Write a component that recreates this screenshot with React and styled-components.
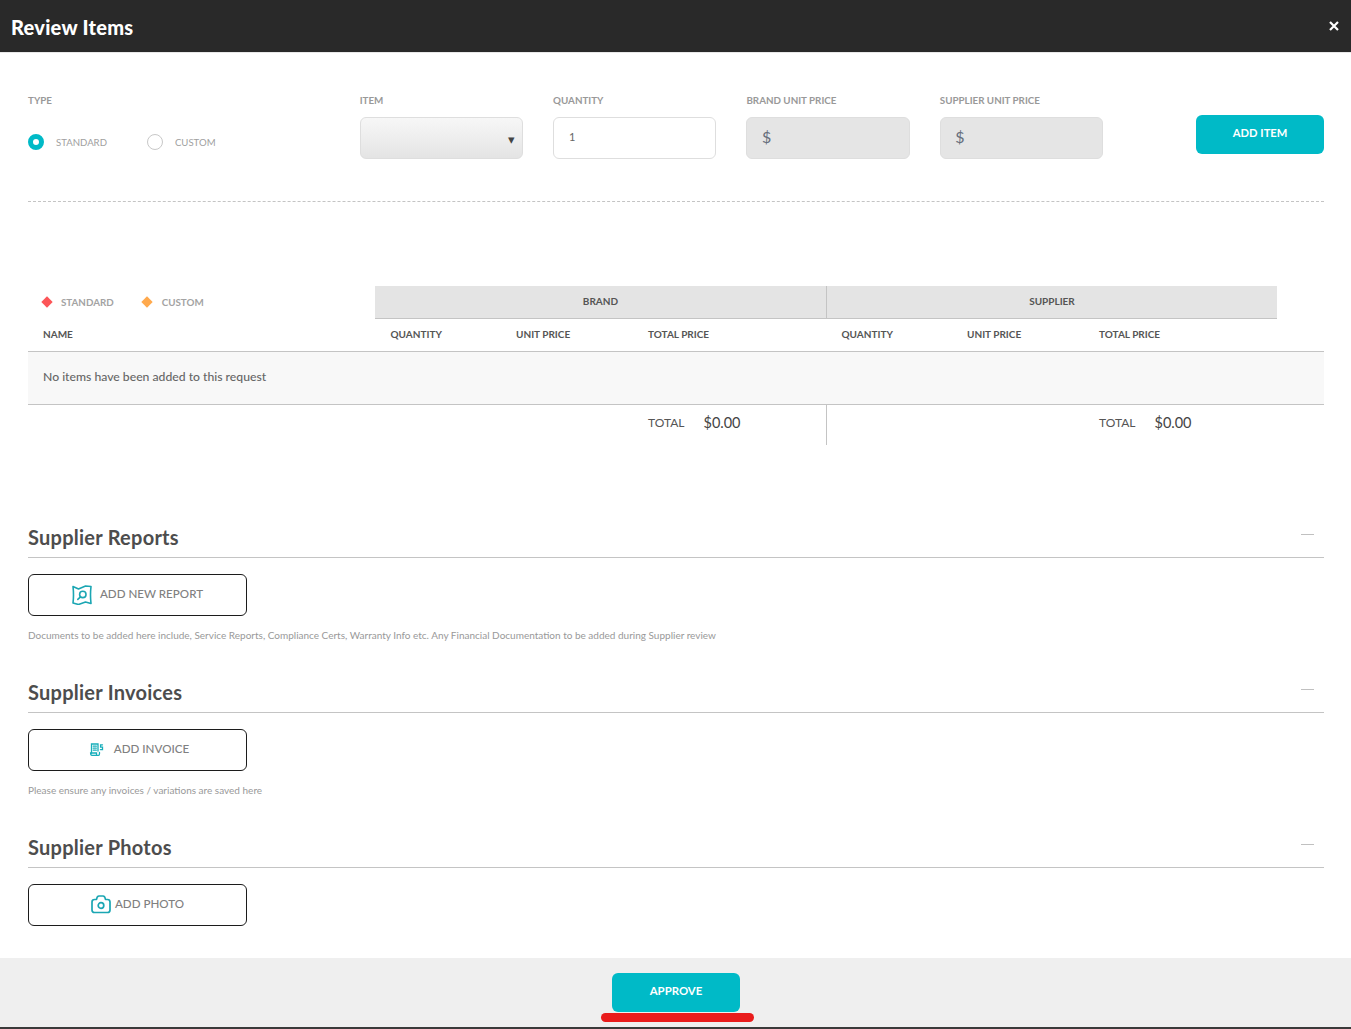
import React from "react";
import styled, { createGlobalStyle } from "styled-components";

const GlobalStyle = createGlobalStyle`
  html, body {
    margin: 0;
    padding: 0;
    background: #fff;
    font-family: "Lato", "Open Sans", sans-serif;
  }
  * {
    box-sizing: border-box;
  }
`;

const TEAL = "#00bac7";

function MapSearchIcon() {
  return (
    <svg width="20" height="20" viewBox="0 0 20 20" fill="none" stroke="#1ba6b3" strokeWidth="1.6" strokeLinejoin="round" strokeLinecap="round">
      <path d="M1 1.5 L6.5 4 L13.5 1 L19 1.5 Q18 10 19 18.5 L13.5 17 L6.5 19.5 L1 18 Q2 10 1 1.5 Z" />
      <circle cx="10.8" cy="9.4" r="3.2" />
      <path d="M8.5 11.8 L5.8 14.4" />
    </svg>
  );
}

function InvoiceIcon() {
  return (
    <svg width="18" height="14" viewBox="-4 0 18 14" fill="none" stroke="#17aebb" strokeWidth="1.3" strokeLinecap="round">
      <path d="M1.5 10 V1 H8 V8" />
      <path d="M3.3 3.2 H6.3 M3.3 5.2 H6.3 M3.3 7.2 H6.3" />
      <path d="M0.6 10 H6.5 V12.4 H2 Q0.6 12.4 0.6 10 Z M6.5 12.4 H8.5 Q9.5 12.4 9.5 10.5 V9.5" />
      <path d="M12.5 1.8 H10.6 V4.2 H12.5 V6.6 H10.4" />
    </svg>
  );
}

function CameraIcon() {
  return (
    <svg width="20" height="19" viewBox="0 0 20 19" fill="none" stroke="#1ba6b3" strokeWidth="1.7" strokeLinejoin="round">
      <path d="M1 7 Q1 4.5 3.5 4.5 H5.5 Q6 1 8 1 H12 Q14 1 14.5 4.5 H16.5 Q19 4.5 19 7 V15 Q19 17.5 16.5 17.5 H3.5 Q1 17.5 1 15 Z" />
      <circle cx="10" cy="10.5" r="2.8" />
    </svg>
  );
}

function CloseIcon() {
  return (
    <svg width="10" height="10" viewBox="0 0 10 10" stroke="#fff" strokeWidth="2.2">
      <path d="M1 1 L9 9 M9 1 L1 9" />
    </svg>
  );
}

const sections = [
  {
    title: "Supplier Reports",
    label: "ADD NEW REPORT",
    icon: <MapSearchIcon />,
    gap: 8,
    hint: "Documents to be added here include, Service Reports, Compliance Certs, Warranty Info etc. Any Financial Documentation to be added during Supplier review",
  },
  {
    title: "Supplier Invoices",
    label: "ADD INVOICE",
    icon: <InvoiceIcon />,
    gap: 10,
    hint: "Please ensure any invoices / variations are saved here",
  },
  {
    title: "Supplier Photos",
    label: "ADD PHOTO",
    icon: <CameraIcon />,
    gap: 4,
  },
];

export default function App() {
  return (
    <Page>
      <GlobalStyle />
      <Header>
        <Title>Review Items</Title>
        <CloseButton>
          <CloseIcon />
        </CloseButton>
      </Header>

      <Content>
        <FormRow>
          <TypeField>
            <FieldLabel>TYPE</FieldLabel>
            <RadioRow>
              <RadioOption>
                <Radio $checked />
                <RadioLabel>STANDARD</RadioLabel>
              </RadioOption>
              <RadioOption>
                <Radio />
                <RadioLabel>CUSTOM</RadioLabel>
              </RadioOption>
            </RadioRow>
          </TypeField>
          <Field>
            <FieldLabel>ITEM</FieldLabel>
            <SelectBox>
              <SelectArrow>▾</SelectArrow>
            </SelectBox>
          </Field>
          <Field>
            <FieldLabel>QUANTITY</FieldLabel>
            <InputBox>1</InputBox>
          </Field>
          <Field>
            <FieldLabel>BRAND UNIT PRICE</FieldLabel>
            <PriceBox>$</PriceBox>
          </Field>
          <Field>
            <FieldLabel>SUPPLIER UNIT PRICE</FieldLabel>
            <PriceBox>$</PriceBox>
          </Field>
          <AddItemButton>ADD ITEM</AddItemButton>
        </FormRow>

        <ItemsTable>
          <GroupRow>
            <Legend>
              <LegendItem>
                <Diamond $color="#fc5558" />
                STANDARD
              </LegendItem>
              <LegendItem>
                <Diamond $color="#ffa94d" />
                CUSTOM
              </LegendItem>
            </Legend>
            <GroupHead>BRAND</GroupHead>
            <GroupHead $divider>SUPPLIER</GroupHead>
          </GroupRow>
          <ColumnRow>
            <NameHead>NAME</NameHead>
            <PriceColumns>
              <span>QUANTITY</span>
              <span>UNIT PRICE</span>
              <span>TOTAL PRICE</span>
            </PriceColumns>
            <PriceColumns>
              <span>QUANTITY</span>
              <span>UNIT PRICE</span>
              <span>TOTAL PRICE</span>
            </PriceColumns>
          </ColumnRow>
          <EmptyRow>No items have been added to this request</EmptyRow>
          <TotalRow>
            <span />
            <TotalCell>
              <TotalLabel>TOTAL</TotalLabel>
              <TotalValue>$0.00</TotalValue>
            </TotalCell>
            <TotalCell $divider>
              <TotalLabel>TOTAL</TotalLabel>
              <TotalValue>$0.00</TotalValue>
            </TotalCell>
          </TotalRow>
        </ItemsTable>

        <Sections>
          {sections.map((s) => (
            <Section key={s.title}>
              <SectionHead>
                <SectionTitle>{s.title}</SectionTitle>
                <Collapse />
              </SectionHead>
              <OutlineButton $gap={s.gap}>
                {s.icon}
                <span>{s.label}</span>
              </OutlineButton>
              {s.hint && <Hint>{s.hint}</Hint>}
            </Section>
          ))}
        </Sections>
      </Content>

      <Footer>
        <ApproveWrap>
          <ApproveButton>APPROVE</ApproveButton>
          <RedMark />
        </ApproveWrap>
      </Footer>
    </Page>
  );
}

const Page = styled.div`
  display: flex;
  flex-direction: column;
  height: 1029px;
  overflow: hidden;
  background: #fff;
`;

const Header = styled.header`
  display: flex;
  align-items: center;
  justify-content: space-between;
  height: 53px;
  padding: 0 12px 0 11px;
  background: #292929;
  border-bottom: 1px solid #e8e8e8;
  flex-shrink: 0;
`;

const Title = styled.h1`
  margin: 2px 0 0;
  font-size: 20px;
  font-weight: 900;
  letter-spacing: 0.25px;
  color: #fff;
`;

const CloseButton = styled.div`
  display: flex;
  margin-top: -1px;
`;

const Content = styled.main`
  flex: 1;
  min-height: 0;
  padding: 0 27px 0 28px;
`;

const FormRow = styled.div`
  display: flex;
  align-items: flex-start;
  height: 149px;
  padding-top: 41px;
  border-bottom: 1px dashed #c4c4c4;
`;

const Field = styled.div`
  display: flex;
  flex-direction: column;
  width: 163.5px;
  margin-right: 30px;
`;

const TypeField = styled(Field)`
  width: 332px;
  margin-right: 0;
`;

const FieldLabel = styled.label`
  height: 23px;
  font-size: 9.8px;
  font-weight: 700;
  line-height: 12px;
  color: #999;
`;

const RadioRow = styled.div`
  display: flex;
  gap: 40px;
  margin-top: 17px;
`;

const RadioOption = styled.div`
  display: flex;
  align-items: center;
  gap: 12px;
`;

const Radio = styled.span`
  width: 16px;
  height: 16px;
  border-radius: 50%;
  background: #fff;
  border: ${(p) => (p.$checked ? `5px solid ${TEAL}` : "1px solid #c8c8c8")};
`;

const RadioLabel = styled.span`
  font-size: 9.6px;
  color: #a0a0a0;
`;

const boxStyles = `
  display: flex;
  align-items: center;
  height: 42px;
  border: 1px solid #dedede;
  border-radius: 6px;
  padding-bottom: 3px;
`;

const SelectBox = styled.div`
  ${boxStyles}
  position: relative;
  background: linear-gradient(#f7f7f7, #e4e4e4);
`;

const SelectArrow = styled.span`
  position: absolute;
  right: 7px;
  top: 13px;
  font-size: 13px;
  line-height: 16px;
  color: #444;
`;

const InputBox = styled.div`
  ${boxStyles}
  padding-left: 15px;
  font-size: 11px;
  color: #666;
`;

const PriceBox = styled.div`
  ${boxStyles}
  padding-left: 14.5px;
  font-size: 16px;
  color: #666e7c;
  background: #e5e5e5;
`;

const AddItemButton = styled.button`
  width: 128px;
  height: 39px;
  margin: 21px 0 0 63px;
  padding: 0 0 4px;
  border: 0;
  border-radius: 6px;
  background: ${TEAL};
  color: #fff;
  font-family: inherit;
  font-size: 11.2px;
  font-weight: 700;
`;

const ItemsTable = styled.section`
  margin-top: 84px;
`;

const tableColumns = `
  display: grid;
  grid-template-columns: 347px 451px 451px 47px;
`;

const GroupRow = styled.div`
  ${tableColumns}
  height: 33px;
`;

const Legend = styled.div`
  display: flex;
  align-items: center;
  gap: 29px;
  padding: 0 0 2px 15px;
`;

const LegendItem = styled.div`
  display: flex;
  align-items: center;
  gap: 11px;
  font-size: 9.8px;
  font-weight: 700;
  color: #a3a3a3;

  &:first-child {
    gap: 10px;
  }
`;

const Diamond = styled.span`
  width: 8px;
  height: 8px;
  background: ${(p) => p.$color};
  transform: rotate(45deg);
`;

const GroupHead = styled.div`
  display: flex;
  align-items: center;
  justify-content: center;
  padding-bottom: 2px;
  background: #e4e4e4;
  border-bottom: 1px solid #c4c4c4;
  border-left: ${(p) => (p.$divider ? "1px solid #c4c4c4" : "0")};
  font-size: 10px;
  font-weight: 700;
  color: #555;
`;

const ColumnRow = styled.div`
  ${tableColumns}
  align-items: center;
  height: 33px;
  padding-bottom: 2px;
  border-bottom: 1px solid #c4c4c4;
  font-size: 10px;
  font-weight: 700;
  color: #555;
`;

const NameHead = styled.div`
  padding-left: 15px;
`;

const PriceColumns = styled.div`
  display: grid;
  grid-template-columns: 125.5px 132px 1fr;
  padding-left: 15.5px;
`;

const EmptyRow = styled.div`
  display: flex;
  align-items: center;
  height: 53px;
  padding: 0 0 3px 15px;
  background: #f8f8f8;
  border-bottom: 1px solid #c4c4c4;
  font-size: 12.2px;
  font-weight: 500;
  color: #666;
`;

const TotalRow = styled.div`
  ${tableColumns}
  height: 40px;
`;

const TotalCell = styled.div`
  display: flex;
  align-items: center;
  gap: 19px;
  height: 40px;
  padding: 0 0 5px ${(p) => (p.$divider ? "272px" : "273px")};
  border-left: ${(p) => (p.$divider ? "1px solid #c4c4c4" : "0")};
`;

const TotalLabel = styled.span`
  font-size: 12px;
  color: #555;
`;

const TotalValue = styled.span`
  font-size: 14.5px;
  color: #444;
`;

const Sections = styled.div`
  display: flex;
  flex-direction: column;
  margin-top: 78px;
`;

const Section = styled.section`
  height: 155px;
`;

const SectionHead = styled.div`
  display: flex;
  align-items: center;
  justify-content: space-between;
  height: 35px;
  padding-bottom: 6px;
  border-bottom: 1px solid #c4c4c4;
`;

const SectionTitle = styled.h2`
  margin: 0;
  font-size: 20px;
  font-weight: 700;
  letter-spacing: 0.25px;
  color: #4d4d4d;
`;

const Collapse = styled.span`
  width: 13px;
  height: 1px;
  margin: 0 10px 5px 0;
  background: #c0c0c0;
`;

const OutlineButton = styled.button`
  display: flex;
  align-items: center;
  justify-content: center;
  gap: ${(p) => p.$gap}px;
  width: 219px;
  height: 42px;
  margin-top: 16px;
  padding: 0 0 1px;
  background: #fff;
  border: 1px solid #1c1c1c;
  border-radius: 6px;
  font-family: inherit;
  font-size: 11.6px;
  font-weight: 500;
  color: #808080;

  span {
    margin-top: -2px;
  }
`;

const Hint = styled.p`
  margin: 13px 0 0;
  font-size: 10px;
  line-height: 12px;
  color: #999;
`;

const Footer = styled.footer`
  display: flex;
  justify-content: center;
  flex-shrink: 0;
  height: 71px;
  padding: 15px 0 0 1px;
  background: #efefef;
  border-bottom: 2px solid #3a3a3a;
`;

const ApproveWrap = styled.div`
  position: relative;
`;

const ApproveButton = styled.button`
  display: block;
  width: 128px;
  height: 39px;
  padding: 0 0 4px;
  border: 0;
  border-radius: 6px;
  background: ${TEAL};
  color: #fff;
  font-family: inherit;
  font-size: 11.4px;
  font-weight: 700;
`;

const RedMark = styled.span`
  position: absolute;
  left: -11px;
  top: 40px;
  width: 153px;
  height: 9px;
  border-radius: 5px;
  background: #e91c1c;
`;
